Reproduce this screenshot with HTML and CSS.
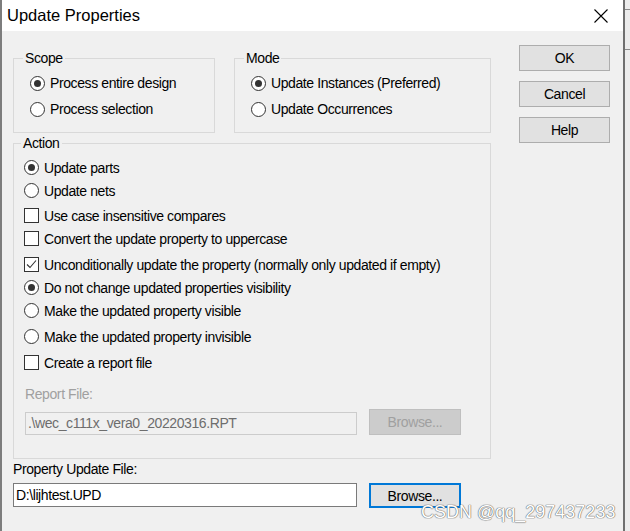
FILE: index.html
```html
<!DOCTYPE html>
<html>
<head>
<meta charset="utf-8">
<title>Update Properties</title>
<link rel="stylesheet" href="styles.css">
</head>
<body>
<div class="screen">
  <div class="window">
    <div class="titlebar">
      <span class="title">Update Properties</span>
      <svg class="close" width="14" height="14" viewBox="0 0 14 14"><path d="M0.5 0.5 L13.5 13.5 M13.5 0.5 L0.5 13.5" stroke="#000" stroke-width="1.1" fill="none"/></svg>
    </div>
    <div class="client">
      <div class="main">
        <div class="top-groups">
          <fieldset class="group scope">
            <legend>Scope</legend>
            <div class="row"><span class="radio on"></span><span>Process entire design</span></div>
            <div class="row"><span class="radio"></span><span>Process selection</span></div>
          </fieldset>
          <fieldset class="group mode">
            <legend>Mode</legend>
            <div class="row"><span class="radio on"></span><span>Update Instances (Preferred)</span></div>
            <div class="row"><span class="radio"></span><span>Update Occurrences</span></div>
          </fieldset>
        </div>
        <fieldset class="group action">
          <legend>Action</legend>
          <div class="arow"><span class="radio on"></span><span>Update parts</span></div>
          <div class="arow"><span class="radio"></span><span>Update nets</span></div>
          <div class="arow m2"><span class="check"></span><span>Use case insensitive compares</span></div>
          <div class="arow"><span class="check"></span><span>Convert the update property to uppercase</span></div>
          <div class="arow m3"><span class="check"><svg width="13" height="13" viewBox="0 0 13 13"><path d="M2 6.5 L5 9.5 L11 2.5" stroke="#333" stroke-width="1.1" fill="none"/></svg></span><span>Unconditionally update the property (normally only updated if empty)</span></div>
          <div class="arow"><span class="radio on"></span><span>Do not change updated properties visibility</span></div>
          <div class="arow"><span class="radio"></span><span>Make the updated property visible</span></div>
          <div class="arow m3"><span class="radio"></span><span>Make the updated property invisible</span></div>
          <div class="arow m3"><span class="check"></span><span>Create a report file</span></div>
          <div class="report-label">Report File:</div>
          <div class="report-row">
            <div class="field disabled">.\wec_c111x_vera0_20220316.RPT</div>
            <div class="btn browse disabled-btn">Browse...</div>
          </div>
        </fieldset>
        <div class="file-label">Property Update File:</div>
        <div class="file-row">
          <div class="field wide">D:\lijhtest.UPD</div>
          <div class="btn browse focused">Browse...</div>
        </div>
      </div>
      <div class="buttons">
        <div class="btn">OK</div>
        <div class="btn">Cancel</div>
        <div class="btn">Help</div>
      </div>
    </div>
  </div>
  <div class="desk"></div>
  <div class="watermark">CSDN @qq_297437233</div>
</div>
</body>
</html>
```
FILE: styles.css
```css
html, body {
  margin: 0;
  padding: 0;
  background: #f0f0f0;
}
body {
  font-family: "Liberation Sans", Arial, sans-serif;
  font-size: 14px;
  color: #000;
}
.screen {
  position: relative;
  display: flex;
  width: 630px;
  height: 531px;
  overflow: hidden;
}
.window {
  box-sizing: border-box;
  width: 625px;
  height: 531px;
  border-left: 2px solid #7d7d7d;
  border-right: 2px solid #6f6f6f;
  background: #f0f0f0;
  display: flex;
  flex-direction: column;
}
.desk {
  flex: 1;
  background: linear-gradient(to bottom, #ececec 0 9px, #8a8a8a 9px 10px, #ececec 10px 49px, #8a8a8a 49px 50px, #ececec 50px);
}
.titlebar {
  height: 31px;
  background: #fff;
  display: flex;
  align-items: center;
  justify-content: space-between;
  padding: 0 15px 0 5px;
}
.title {
  font-size: 16.5px;
  letter-spacing: 0;
}
.close {
  display: block;
}
.client {
  display: flex;
  gap: 28px;
  padding: 14px 0 0 11px;
  letter-spacing: -0.4px;
}
.main {
  width: 478px;
  margin-top: 5px;
}
.top-groups {
  display: flex;
  gap: 19px;
}
.group {
  box-sizing: border-box;
  margin: 0;
  min-width: 0;
  border: 1px solid #d9d9d9;
  padding: 4px 0 10px 0;
}
.group legend {
  margin-left: 9px;
  padding: 0 2px;
  line-height: 16px;
}
.scope {
  width: 202px;
}
.mode {
  flex: 1;
}
.row {
  height: 26px;
  display: flex;
  align-items: center;
  gap: 5px;
  padding-left: 16px;
}
.radio {
  box-sizing: border-box;
  width: 15px;
  height: 15px;
  border: 1px solid #333;
  border-radius: 50%;
  background: #fff;
  display: flex;
  align-items: center;
  justify-content: center;
  flex: none;
}
.radio.on::after {
  content: "";
  width: 7px;
  height: 7px;
  border-radius: 50%;
  background: #333;
}
.check {
  box-sizing: border-box;
  width: 15px;
  height: 15px;
  border: 1px solid #333;
  background: #fff;
  display: flex;
  flex: none;
}
.check svg {
  display: block;
}
.action {
  margin-top: 2px;
  padding: 5px 0 23px 0;
}
.action legend {
  margin-left: 7px;
}
.arow {
  height: 23px;
  display: flex;
  align-items: center;
  gap: 5px;
  padding-left: 10px;
}
.arow.m2 { margin-top: 2px; }
.arow.m3 { margin-top: 3px; }
.report-label {
  margin: 12px 0 0 11px;
  line-height: 16px;
  color: #a0a0a0;
}
.report-row {
  display: flex;
  align-items: flex-end;
  gap: 12px;
  margin: 7px 0 0 11px;
  height: 26px;
}
.field {
  box-sizing: border-box;
  height: 24px;
  line-height: 22px;
  padding-left: 2px;
  border: 1px solid #7a7a7a;
  background: #fff;
  white-space: nowrap;
}
.field.disabled {
  width: 332px;
  height: 23px;
  line-height: 21px;
  border-color: #cccccc;
  background: #f0f0f0;
  color: #6d6d6d;
}
.btn {
  box-sizing: border-box;
  width: 91px;
  height: 26px;
  border: 1px solid #adadad;
  background: #e1e1e1;
  display: flex;
  align-items: center;
  justify-content: center;
}
.browse {
  width: 92px;
}
.disabled-btn {
  background: #cccccc;
  border-color: #bfbfbf;
  color: #a0a0a0;
}
.focused {
  border: 2px solid #0078d7;
  height: 25px;
}
.file-label {
  margin-top: 2px;
  line-height: 16px;
}
.file-row {
  display: flex;
  align-items: flex-start;
  gap: 12px;
  margin-top: 6px;
}
.field.wide {
  width: 344px;
}
.buttons {
  display: flex;
  flex-direction: column;
  gap: 10px;
}
.watermark {
  position: absolute;
  left: 421px;
  top: 503px;
  font-size: 18px;
  line-height: 18px;
  color: #ffffff;
  text-shadow: 0 0 1px #666, 0 0 1px #666, 0 0 1px #888;
  white-space: nowrap;
}
```
